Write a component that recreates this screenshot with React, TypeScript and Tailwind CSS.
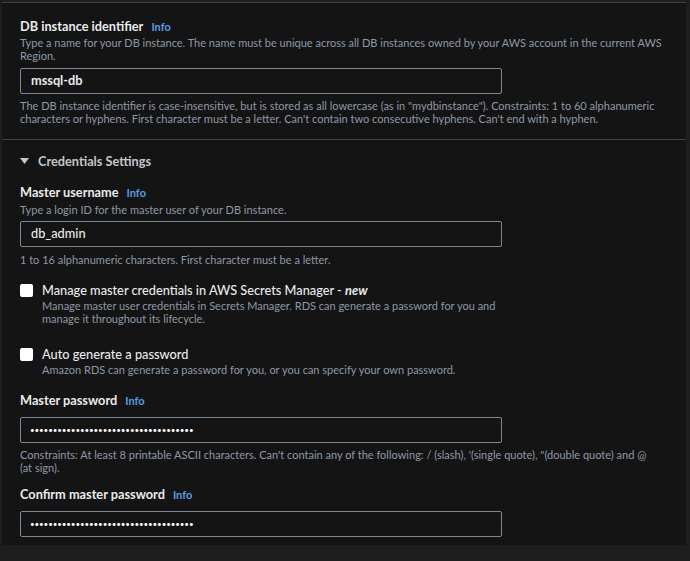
import React from "react";

const font = { fontFamily: "Lato, 'Open Sans', sans-serif" };

function Label({ children }: { children: React.ReactNode }) {
  return (
    <div className="flex items-baseline gap-[8px] leading-[18px]">
      <span className="text-[12.75px] font-bold text-[#e9ebed]">{children}</span>
      <span className="text-[11px] font-bold text-[#539fe5]">Info</span>
    </div>
  );
}

function Desc({ children }: { children: React.ReactNode }) {
  return <p className="text-[11px] leading-[13px] text-[#8d99a8]">{children}</p>;
}

function Field({ children }: { children: React.ReactNode }) {
  return (
    <div className="w-[482px] h-[26px] border border-[#7d8998] rounded-[2px] flex items-center px-[10px]">
      {children}
    </div>
  );
}

function Dots() {
  return (
    <div className="w-[482px] h-[26px] border border-[#7d8998] rounded-[2px] flex items-center px-[9px]">
      <span className="text-[8px] tracking-[-0.1px] text-white leading-none">{"•".repeat(36)}</span>
    </div>
  );
}

function Check({ title, children }: { title: React.ReactNode; children: React.ReactNode }) {
  return (
    <div className="flex gap-[9px]">
      <div className="w-[13px] h-[13px] mt-[3px] bg-white rounded-[2px] shrink-0" />
      <div className="flex flex-col">
        <span className="text-[12.75px] font-medium leading-[18px] text-[#e9ebed]">{title}</span>
        <div className="w-[462px]">
          <Desc>{children}</Desc>
        </div>
      </div>
    </div>
  );
}

export default function App() {
  return (
    <div className="w-[690px] h-[561px] bg-[#1e1e1e] pt-[2px] pl-[2px] pr-[4px] pb-[16px]" style={font}>
      <div className="h-full bg-[#141414] border-t border-[#414141]">
        <section className="px-[18px] pt-[14px] pb-[14px] flex flex-col">
          <Label>DB instance identifier</Label>
          <div className="w-[650px]">
            <Desc>
              Type a name for your DB instance. The name must be unique across all DB instances owned by your AWS
              account in the current AWS Region.
            </Desc>
          </div>
          <div className="mt-[6px]">
            <Field>
              <span className="text-[12.75px] font-bold text-[#e9ebed]">mssql-db</span>
            </Field>
          </div>
          <div className="mt-[5px] w-[650px]">
            <Desc>
              The DB instance identifier is case-insensitive, but is stored as all lowercase (as in "mydbinstance").
              Constraints: 1 to 60 alphanumeric characters or hyphens. First character must be a letter. Can't contain
              two consecutive hyphens. Can't end with a hyphen.
            </Desc>
          </div>
        </section>
        <div className="border-t border-[#414141]" />
        <section className="px-[18px] pt-[12px] pb-[9px] flex flex-col">
          <div className="flex items-center gap-[9px] leading-[18px]">
            <svg width="9" height="8" viewBox="0 0 9 8" className="text-[#c6c6cd]">
              <polygon points="0,1 9,1 4.5,7" fill="currentColor" />
            </svg>
            <span className="text-[12.75px] font-bold text-[#c6c6cd]">Credentials Settings</span>
          </div>

          <div className="mt-[13px]">
            <Label>Master username</Label>
          </div>
          <div className="mt-[1px]">
            <Desc>Type a login ID for the master user of your DB instance.</Desc>
          </div>
          <div className="mt-[5px]">
            <Field>
              <span className="text-[12.75px] font-medium text-[#e9ebed]">db_admin</span>
            </Field>
          </div>
          <div className="mt-[6px]">
            <Desc>1 to 16 alphanumeric characters. First character must be a letter.</Desc>
          </div>

          <div className="mt-[15px]">
            <Check
              title={
                <>
                  Manage master credentials in AWS Secrets Manager - <i className="font-bold">new</i>
                </>
              }
            >
              Manage master user credentials in Secrets Manager. RDS can generate a password for you and manage it
              throughout its lifecycle.
            </Check>
          </div>

          <div className="mt-[20px]">
            <Check title="Auto generate a password">
              Amazon RDS can generate a password for you, or you can specify your own password.
            </Check>
          </div>

          <div className="mt-[15px]">
            <Label>Master password</Label>
          </div>
          <div className="mt-[7px]">
            <Dots />
          </div>
          <div className="mt-[5px] w-[650px]">
            <Desc>
              Constraints: At least 8 printable ASCII characters. Can't contain any of the following: / (slash),
              '(single quote), "(double quote) and @
              <br />
              (at sign).
            </Desc>
          </div>

          <div className="mt-[11px]">
            <Label>Confirm master password</Label>
          </div>
          <div className="mt-[7px]">
            <Dots />
          </div>
        </section>
      </div>
    </div>
  );
}
